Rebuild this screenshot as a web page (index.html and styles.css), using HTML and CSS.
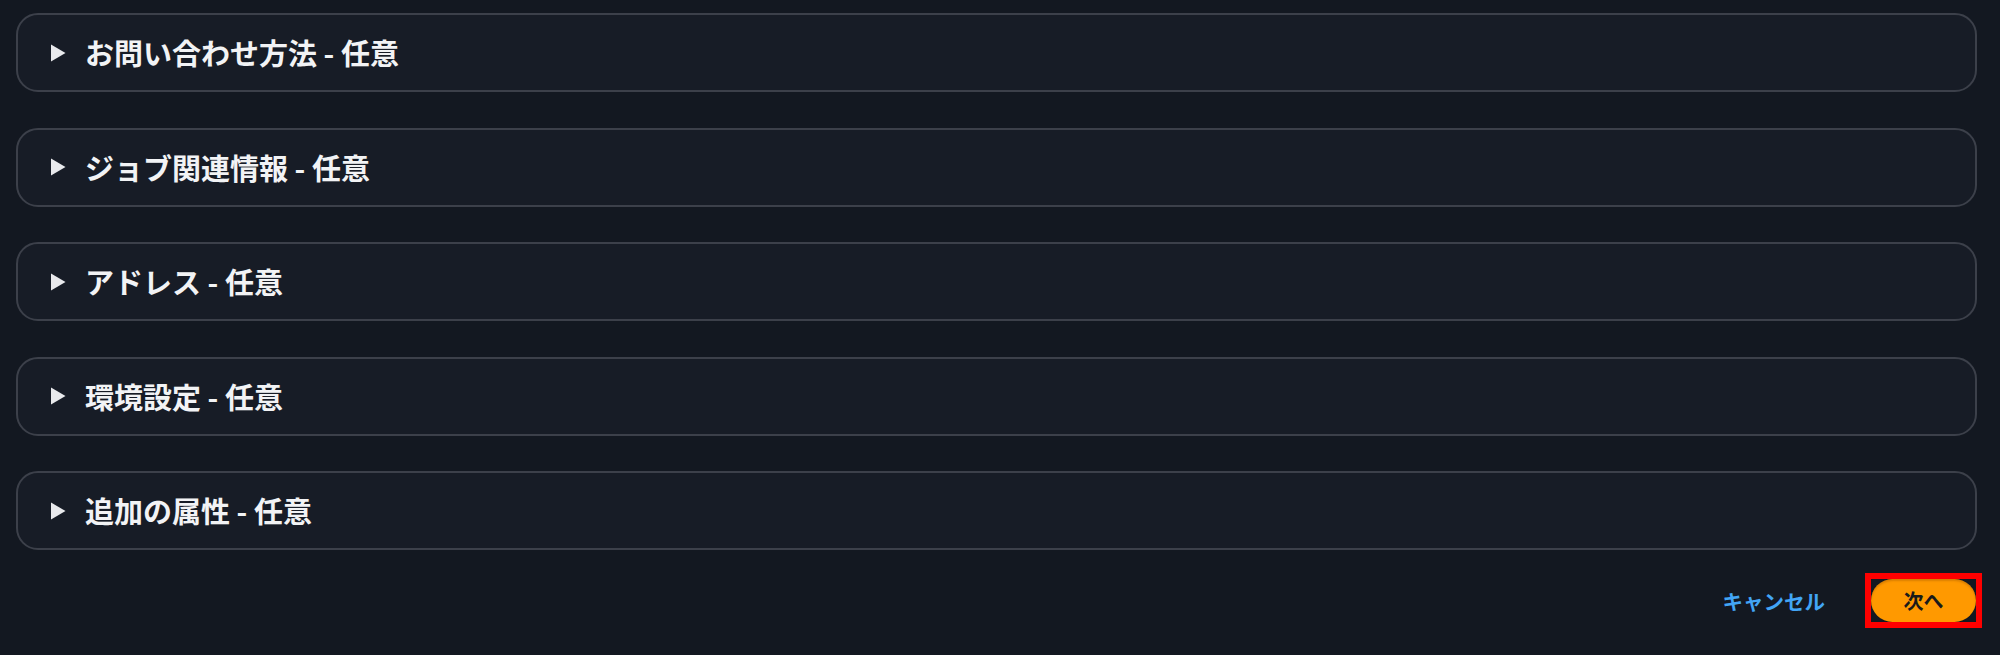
FILE: index.html
```html
<!DOCTYPE html>
<html lang="ja">
<head>
<meta charset="utf-8">
<link rel="stylesheet" href="styles.css">
</head>
<body>
<main class="page">
  <section class="sections">
    <div class="card"><span class="caret"><svg width="16" height="18" viewBox="0 0 16 18"><polygon points="1,0.5 15.5,9 1,17.5" fill="#e8e9ec"/></svg></span><span class="title">お問い合わせ方法 - 任意</span></div>
    <div class="card"><span class="caret"><svg width="16" height="18" viewBox="0 0 16 18"><polygon points="1,0.5 15.5,9 1,17.5" fill="#e8e9ec"/></svg></span><span class="title">ジョブ関連情報 - 任意</span></div>
    <div class="card"><span class="caret"><svg width="16" height="18" viewBox="0 0 16 18"><polygon points="1,0.5 15.5,9 1,17.5" fill="#e8e9ec"/></svg></span><span class="title">アドレス - 任意</span></div>
    <div class="card"><span class="caret"><svg width="16" height="18" viewBox="0 0 16 18"><polygon points="1,0.5 15.5,9 1,17.5" fill="#e8e9ec"/></svg></span><span class="title">環境設定 - 任意</span></div>
    <div class="card"><span class="caret"><svg width="16" height="18" viewBox="0 0 16 18"><polygon points="1,0.5 15.5,9 1,17.5" fill="#e8e9ec"/></svg></span><span class="title">追加の属性 - 任意</span></div>
  </section>
  <footer class="actions">
    <a class="cancel">キャンセル</a>
    <span class="highlight"><button class="next">次へ</button></span>
  </footer>
</main>
</body>
</html>
```

FILE: styles.css
```css
html, body {
  margin: 0;
  padding: 0;
  background: #131821;
  height: 100%;
}
body {
  font-family: "Noto Sans CJK JP", "Noto Sans", sans-serif;
  color: #f2f3f5;
}
.page {
  padding: 13px 23px 0 16px;
}
.sections {
  display: flex;
  flex-direction: column;
  gap: 35.5px;
}
.card {
  height: 79px;
  box-sizing: border-box;
  border: 2px solid #3c404a;
  border-radius: 22px;
  background: #171c26;
  display: flex;
  align-items: center;
  padding-left: 32px;
}
.caret {
  display: flex;
  width: 16px;
  height: 18px;
  margin-right: 19px;
}
.title {
  font-size: 29px;
  font-weight: 700;
  line-height: 1;
  letter-spacing: 0;
}
.actions {
  display: flex;
  justify-content: flex-end;
  align-items: center;
  gap: 40px;
  margin-top: 23px;
  margin-right: -5px;
}
.cancel {
  color: #42a5f5;
  font-size: 20.5px;
  font-weight: 700;
  cursor: pointer;
}
.highlight {
  display: inline-flex;
  border: 6px solid #ff0000;
}
.next {
  width: 105px;
  height: 43px;
  border: none;
  border-radius: 22px;
  background: #ff9900;
  color: #1a1a1a;
  font-family: "Noto Sans CJK JP", "Noto Sans", sans-serif;
  font-size: 20px;
  font-weight: 700;
  padding: 0;
  box-shadow: inset 0 2px 2px rgba(150, 80, 0, 0.35);
}
```
